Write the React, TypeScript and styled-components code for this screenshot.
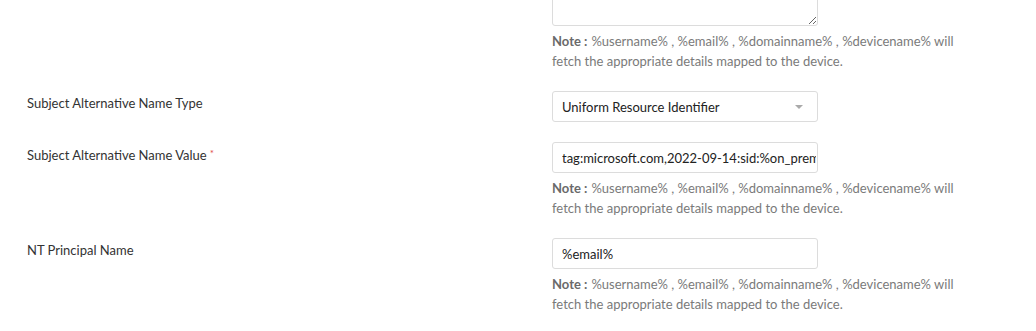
import React from 'react';
import styled, { createGlobalStyle } from 'styled-components';

const GlobalStyle = createGlobalStyle`
  html, body {
    margin: 0;
    padding: 0;
    background: #ffffff;
    overflow: hidden;
  }
  body {
    font-family: Lato, "Open Sans", "Liberation Sans", sans-serif;
    font-size: 13px;
    color: #333333;
  }
`;

const Form = styled.div`
  display: flex;
  flex-direction: column;
  gap: 20px;
  margin-top: -40px;
  padding-left: 27px;
`;

const Row = styled.div`
  display: grid;
  grid-template-columns: 525px 1fr;
  align-items: start;
`;

const Label = styled.div<{ $offset?: number }>`
  padding-top: ${props => props.$offset ?? 2}px;
  line-height: 20px;
  color: #333333;
`;

const Required = styled.span`
  color: #e04a4a;
  font-size: 10px;
  vertical-align: top;
  margin-left: 3px;
  line-height: 16px;
`;

const Field = styled.div`
  display: flex;
  flex-direction: column;
`;

const TextArea = styled.textarea`
  box-sizing: border-box;
  width: 266px;
  height: 66px;
  border: 1px solid #dcdcdc;
  border-radius: 3px;
  resize: vertical;
  font-family: inherit;
  font-size: 13px;
  outline: none;
`;

const TextInput = styled.input`
  box-sizing: border-box;
  width: 266px;
  height: 31px;
  padding: 0 1px 0 9px;
  border: 1px solid #dcdcdc;
  border-radius: 3px;
  font-family: inherit;
  font-size: 13px;
  color: #222222;
  outline: none;
`;

const Select = styled.div`
  box-sizing: border-box;
  width: 266px;
  height: 31px;
  padding: 0 14px 0 9px;
  border: 1px solid #dcdcdc;
  border-radius: 3px;
  display: flex;
  align-items: center;
  justify-content: space-between;
  color: #222222;
`;

const Caret = styled.span`
  width: 0;
  height: 0;
  border-left: 4px solid transparent;
  border-right: 4px solid transparent;
  border-top: 4px solid #aaaaaa;
`;

const Note = styled.div`
  width: 412px;
  margin-top: 5px;
  line-height: 20px;
  color: #7a7a7a;
`;

const NoteLead = styled.b`
  color: #6a6a6a;
  font-weight: 700;
  margin-right: 4px;
`;

const NoteText: React.FC = () => (
  <Note>
    <NoteLead>Note :</NoteLead>%username% , %email% , %domainname% , %devicename% will fetch the appropriate details mapped to the device.
  </Note>
);

const App: React.FC = () => (
  <>
    <GlobalStyle />
    <Form>
      <Row>
        <Label />
        <Field>
          <TextArea readOnly />
          <NoteText />
        </Field>
      </Row>
      <Row>
        <Label $offset={2}>Subject Alternative Name Type</Label>
        <Field>
          <Select>
            <span>Uniform Resource Identifier</span>
            <Caret />
          </Select>
        </Field>
      </Row>
      <Row>
        <Label $offset={3}>
          Subject Alternative Name Value<Required>*</Required>
        </Label>
        <Field>
          <TextInput readOnly value="tag:microsoft.com,2022-09-14:sid:%on_premisesSid%" />
          <NoteText />
        </Field>
      </Row>
      <Row>
        <Label $offset={2}>NT Principal Name</Label>
        <Field>
          <TextInput readOnly value="%email%" />
          <NoteText />
        </Field>
      </Row>
    </Form>
  </>
);

export default App;
